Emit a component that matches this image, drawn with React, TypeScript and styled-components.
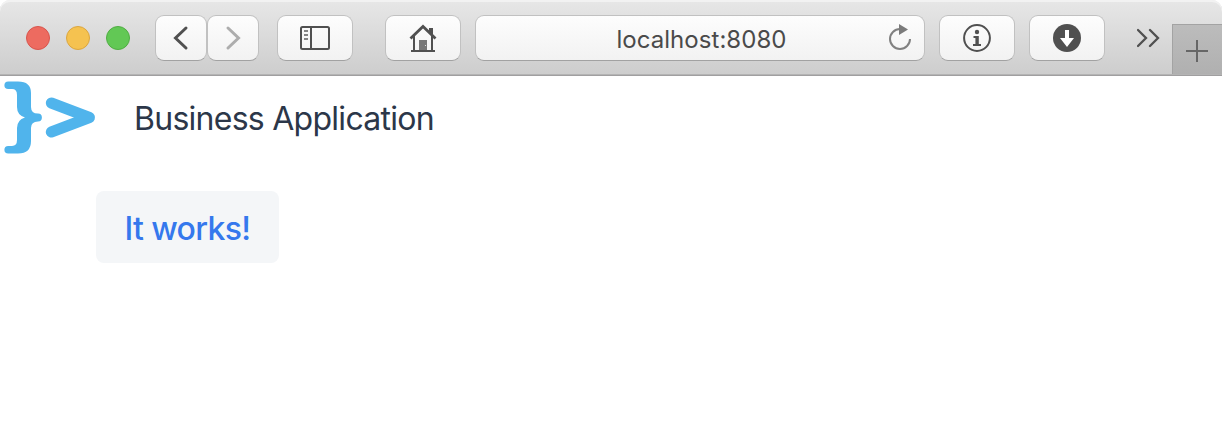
import React from 'react';
import styled, { createGlobalStyle } from 'styled-components';

const GlobalStyle = createGlobalStyle`
  * { box-sizing: border-box; }
  body {
    margin: 0;
    background: #fff;
    font-family: Inter, "Liberation Sans", sans-serif;
    -webkit-font-smoothing: antialiased;
  }
  svg { display: block; flex: none; }
`;

const Window = styled.div`
  width: 1222px;
  height: 432px;
  overflow: hidden;
  background: #fff;
`;

const Toolbar = styled.header`
  display: flex;
  align-items: flex-start;
  height: 76px;
  padding: 15px 0 0 26px;
  border-bottom: 1px solid #a09fa0;
  border-radius: 10px 10px 0 0;
  background: linear-gradient(#e7e7e7, #cdcdcd);
  box-shadow: inset 0 2px 0 #f2f2f2, inset 0 -1px 0 #b4b4b4;
`;

const TrafficLights = styled.div`
  display: flex;
  gap: 16px;
  margin: 11px 25px 0 0;
`;

const Light = styled.span<{ $fill: string; $edge: string }>`
  width: 24px;
  height: 24px;
  border-radius: 50%;
  border: 1px solid ${(p) => p.$edge};
  background: ${(p) => p.$fill};
`;

const ToolButton = styled.button<{ $width?: number; $gap?: number }>`
  display: flex;
  align-items: center;
  justify-content: center;
  flex: none;
  width: ${(p) => p.$width ?? 76}px;
  height: 46px;
  margin: 0 ${(p) => p.$gap ?? 14}px 0 0;
  padding: 0;
  border: 1px solid #c1c1c1;
  border-bottom-color: #a2a2a2;
  border-radius: 9px;
  background: linear-gradient(#fdfdfd, #f2f2f2);
`;

const AddressBar = styled.div`
  display: flex;
  align-items: center;
  flex: none;
  width: 450px;
  height: 46px;
  margin-right: 14px;
  padding: 0 12px 0 39px;
  border: 1px solid #c1c1c1;
  border-bottom-color: #a2a2a2;
  border-radius: 9px;
  background: linear-gradient(#fdfdfd, #f2f2f2);
`;

const Address = styled.span`
  flex: 1;
  padding-top: 4px;
  text-align: center;
  font-size: 24px;
  line-height: 30px;
  letter-spacing: 0.05px;
  color: #4a4a4a;
`;

const Overflow = styled.div`
  margin: 13px 11px 0 18px;
`;

const NewTab = styled.div`
  display: flex;
  align-items: center;
  justify-content: center;
  flex: none;
  width: 50px;
  height: 50px;
  margin-top: 9px;
  padding: 2px 2px 0 0;
  border-top: 1px solid #a3a3a3;
  border-left: 1px solid #a3a3a3;
  background: linear-gradient(#bcbcbc, #b0b0b0);
`;

const AppHeader = styled.div`
  display: flex;
  align-items: center;
  height: 84px;
`;

const Title = styled.h1`
  margin: 0 0 0 31px;
  padding-top: 2px;
  font-size: 32px;
  font-weight: 400;
  line-height: 40px;
  letter-spacing: -0.73px;
  color: #2c3749;
`;

const Content = styled.main`
  padding: 31px 96px;
`;

const ActionButton = styled.button`
  width: 183px;
  height: 72px;
  padding: 2px 0 0;
  border: 0;
  border-radius: 8px;
  background: #f4f6f8;
  font-family: inherit;
  font-size: 32px;
  font-weight: 500;
  letter-spacing: -0.65px;
  color: #3578ed;
`;

const Chevron = ({ forward = false }: { forward?: boolean }) => (
  <svg width="50" height="44" viewBox="0 0 50 44" fill="none" strokeWidth="3" strokeLinecap="round"
    stroke={forward ? '#adadad' : '#505050'}>
    <path d={forward ? 'M20 12 30.5 22 20 32' : 'M30 12 19.5 22 30 32'} />
  </svg>
);

const SidebarIcon = () => (
  <svg width="30" height="24" viewBox="0 0 30 24" fill="none" stroke="#505050" strokeWidth="2">
    <rect x="1" y="1" width="28" height="22" rx="1.5" />
    <path d="M11 1v22" />
    <path d="M4 5h4M4 9h4M4 13h4" stroke="#858585" />
  </svg>
);

const HomeIcon = () => (
  <svg width="28" height="28" viewBox="0 0 28 28" fill="none" stroke="#505050">
    <path d="M1.5 14.5 14 2.5 26.5 14.5" strokeWidth="2.8" />
    <path d="M5 12v14M23 12v14M2 27h24" strokeWidth="2" />
    <path d="M20 4h4v8l-4-4z" fill="#505050" stroke="none" />
    <path d="M10 16h8v10h-8z" fill="#777" stroke="none" />
    <path d="M16 21h1v1h-1z" fill="#ddd" stroke="none" />
  </svg>
);

const ReloadIcon = () => (
  <svg width="24" height="28" viewBox="0 0 24 28">
    <path d="M12 5A10 10 0 1 0 22 15" fill="none" stroke="#808080" strokeWidth="2" />
    <path d="M11 0v11l9-5.5z" fill="#7b7b7b" />
  </svg>
);

const InfoIcon = () => (
  <svg width="28" height="28" viewBox="0 0 28 28" fill="#505050">
    <circle cx="14" cy="14" r="12.9" fill="none" stroke="#505050" strokeWidth="2" />
    <circle cx="14" cy="8" r="2.2" />
    <path d="M10.5 12h5.3v8h2.2v2h-8v-2h2.4v-6h-1.9z" />
  </svg>
);

const DownloadIcon = () => (
  <svg width="28" height="28" viewBox="0 0 28 28">
    <circle cx="14" cy="14" r="14" fill="#505050" />
    <path d="M12 6h4v8h5l-7 9-7-9h5z" fill="#fff" />
  </svg>
);

const MoreIcon = () => (
  <svg width="24" height="20" viewBox="0 0 24 20" fill="none" stroke="#505050" strokeWidth="2.3" strokeLinecap="round">
    <path d="M1 2 9 10 1 18M13 2l8 8-8 8" />
  </svg>
);

const PlusIcon = () => (
  <svg width="22" height="22" viewBox="0 0 22 22" stroke="#666" strokeWidth="2">
    <path d="M11 0v22M0 11h22" />
  </svg>
);

const Logo = () => (
  <svg width="103" height="84" viewBox="0 0 103 84" fill="none" stroke="#50b4ec" strokeLinecap="round" strokeLinejoin="round">
    <path
      d="M8.2 5.5H18Q31 5.5 31 17V31Q31 37.6 38 37.6A3.9 3.9 0 0 1 38 45.4Q31 45.4 31 52V65Q31 77.5 18 77.5H8.2A3.8 3.8 0 0 1 8.2 69.9H12Q17 69.9 17 64V52Q17 44 25 41.5Q17 39 17 31V19Q17 13.1 12 13.1H8.2A3.8 3.8 0 0 1 8.2 5.5Z"
      fill="#50b4ec"
      stroke="none"
    />
    <path d="M51.3 27 89.5 41.5 51.3 56" strokeWidth="11" />
  </svg>
);

export default function App() {
  return (
    <Window>
      <GlobalStyle />
      <Toolbar>
        <TrafficLights>
          <Light $fill="#ed6b60" $edge="#d8554d" />
          <Light $fill="#f5c250" $edge="#dba640" />
          <Light $fill="#62c855" $edge="#50ad43" />
        </TrafficLights>
        <ToolButton $width={52} $gap={0} aria-label="Back"><Chevron /></ToolButton>
        <ToolButton $width={52} $gap={18} aria-label="Forward"><Chevron forward /></ToolButton>
        <ToolButton $gap={32} aria-label="Sidebar"><SidebarIcon /></ToolButton>
        <ToolButton aria-label="Home"><HomeIcon /></ToolButton>
        <AddressBar>
          <Address>localhost:8080</Address>
          <ReloadIcon />
        </AddressBar>
        <ToolButton aria-label="Page info"><InfoIcon /></ToolButton>
        <ToolButton aria-label="Downloads"><DownloadIcon /></ToolButton>
        <Overflow><MoreIcon /></Overflow>
        <NewTab><PlusIcon /></NewTab>
      </Toolbar>
      <AppHeader>
        <Logo />
        <Title>Business Application</Title>
      </AppHeader>
      <Content>
        <ActionButton>It works!</ActionButton>
      </Content>
    </Window>
  );
}
